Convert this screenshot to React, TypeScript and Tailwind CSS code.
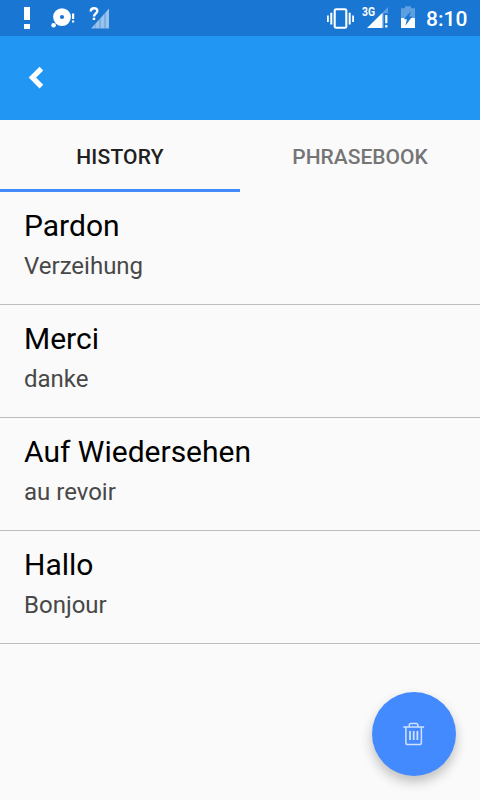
const phrases = [
  { source: 'Pardon', target: 'Verzeihung' },
  { source: 'Merci', target: 'danke' },
  { source: 'Auf Wiedersehen', target: 'au revoir' },
  { source: 'Hallo', target: 'Bonjour' },
];

function NotificationIcons() {
  return (
    <svg width="120" height="36" viewBox="0 0 120 36" fill="white">
      <path d="M24 7h6v13h-6zM24 24h6v5h-6z" />
      <path fillRule="evenodd" d="M62 8.2a8.9 8.9 0 1 0 0 17.8a8.9 8.9 0 1 0 0-17.8zM62 14.9a2.1 2.1 0 1 1 0 4.2a2.1 2.1 0 1 1 0-4.2z" />
      <circle cx="53.6" cy="25.2" r="2.3" />
      <path d="M72 13.5h2.2v5.5H72zM72 20.5h2.2v2H72z" />
      <path d="M91 28.5 109 8.5v20z" opacity="0.42" />
      <path d="M91.5 28.2 95 24.4v3.8zM96 23.3l3-3.3v8.2h-3zM101 17.8l3-3.4v13.8h-3zM106 12.2l3-3.4v19.4h-3z" opacity="0.25" />
      <path d="M90.7 11.6c0-4.6 6.6-4.4 6.6-.6 0 2.6-3.3 2.7-3.3 5.4" fill="none" stroke="white" strokeWidth="2.5" />
      <path d="M92.7 17.7h2.5V20h-2.5z" />
    </svg>
  );
}

function SystemIcons() {
  return (
    <svg width="96" height="36" viewBox="324 0 96 36" fill="white">
      <rect x="334.7" y="9.2" width="11.6" height="18.6" rx="1.4" fill="none" stroke="white" strokeWidth="2.1" />
      <path d="M330.3 12.8h2v11.7h-2zM327 15.5h1.8v6.6H327zM348.7 12.8h2v11.7h-2zM352.2 15.5h1.8v6.6h-1.8z" />
      <text x="362" y="16.3" fontSize="12.2" fontWeight="700" textLength="13" lengthAdjust="spacingAndGlyphs">3G</text>
      <path d="M367 28 382.5 12.8V28z" />
      <path d="M382.5 12.8 388 7v6.3h-4.2V28h-1.3z" opacity="0.3" />
      <path d="M385.2 15h2.2v8.2h-2.2zM385.2 25h2.2v2.6h-2.2z" />
      <path d="M401 18V8.3h4V6.2h6v2.1h4V18z" opacity="0.3" />
      <path d="M401 18h14v10h-14z" />
      <path d="M410.8 11.2 409.3 16.6h2.9L405.4 25.8l1.5-6.6h-3.1z" fill="#1976d2" />
    </svg>
  );
}

function TrashIcon() {
  return (
    <svg width="24" height="24" viewBox="402 722 24 24" fill="none" stroke="white" strokeWidth="1.5" opacity="0.75">
      <path d="M403.3 727h20.8M409.2 727v-1.6q0-1.8 1.8-1.8h5.1q1.8 0 1.8 1.8v1.6M405.9 727v15.7q0 1.8 1.8 1.8h11.9q1.8 0 1.8-1.8V727" />
      <path d="M410 731v9M413.7 731v9M417.4 731v9" strokeWidth="1.8" />
    </svg>
  );
}

export default function App() {
  return (
    <div className="relative flex h-[800px] w-[480px] flex-col bg-[#fafafa] font-['Roboto',sans-serif]">
      <div className="flex h-9 shrink-0 items-center bg-[#1976d2]">
        <NotificationIcons />
        <div className="ml-auto flex items-center pr-3">
          <SystemIcons />
          <span className="ml-1.5 w-[42px] whitespace-nowrap pt-px text-[21px] leading-9 font-medium text-white">8:10</span>
        </div>
      </div>
      <header className="flex h-[84px] shrink-0 items-center bg-[#2196f3] pl-6">
        <button aria-label="Back" className="flex size-6 items-center justify-center">
          <svg width="24" height="24" viewBox="24 66 24 24" fill="none" stroke="white" strokeWidth="5.2" strokeLinejoin="miter">
            <path d="M41.4 68.6 32.4 77.6 41.4 86.6" />
          </svg>
        </button>
      </header>
      <nav className="grid h-[72px] shrink-0 grid-cols-2 text-[21px] font-medium">
        <button className="border-b-[3px] border-[#448aff] pt-1.5 tracking-[0.2px] text-[#212121]">HISTORY</button>
        <button className="border-b-[3px] border-transparent pt-1.5 text-[#757575]">PHRASEBOOK</button>
      </nav>
      <ul>
        {phrases.map(({ source, target }) => (
          <li key={source} className="h-[113px] border-b border-[#bdbdbd] px-6 pt-4">
            <p className="text-[30px] leading-9 text-black">{source}</p>
            <p className="mt-2 text-2xl leading-7 text-[#484848]">{target}</p>
          </li>
        ))}
      </ul>
      <button
        aria-label="Clear history"
        className="absolute right-6 bottom-6 flex size-[84px] items-center justify-center rounded-full bg-[#448aff] shadow-[0_6px_12px_rgba(0,0,0,0.24)]"
      >
        <TrashIcon />
      </button>
    </div>
  );
}
